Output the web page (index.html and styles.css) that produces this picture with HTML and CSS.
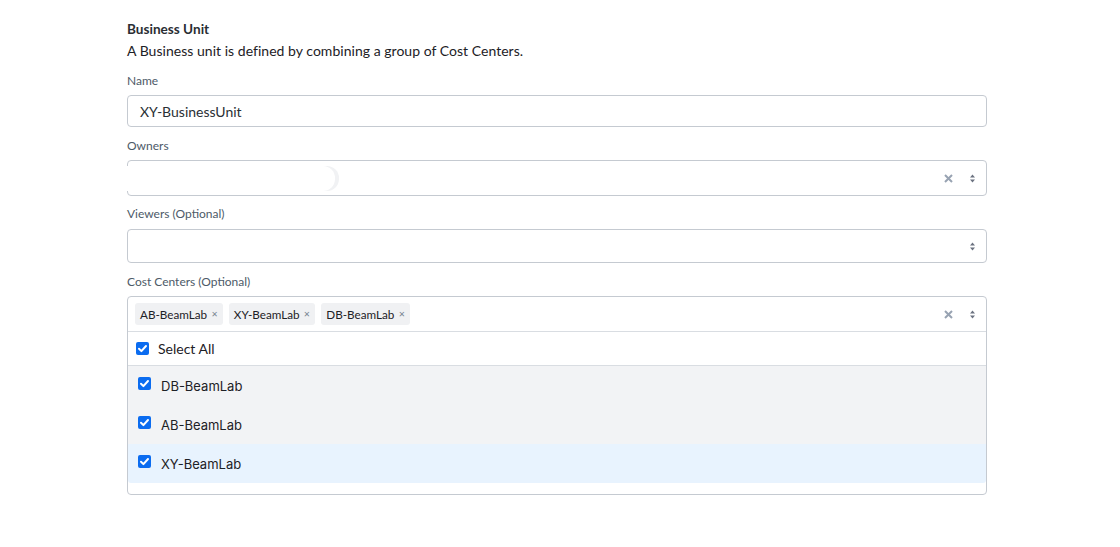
FILE: index.html
```html
<!DOCTYPE html>
<html>
<head>
<meta charset="utf-8">
<link rel="stylesheet" href="styles.css">
</head>
<body>
<div class="page">
  <div class="title">Business Unit</div>
  <div class="desc">A Business unit is defined by combining a group of Cost Centers.</div>

  <label class="label l-name">Name</label>
  <div class="input">XY-BusinessUnit</div>

  <label class="label l-owners">Owners</label>
  <div class="select owners">
    <div class="mask"></div>
    <div class="spacer"></div>
    <span class="clear"><svg width="9" height="9" viewBox="0 0 9 9"><path d="M1 1 L8 8 M8 1 L1 8" stroke="#98a3b2" stroke-width="2"/></svg></span>
    <span class="arrows"><svg width="7" height="9" viewBox="0 0 7 9"><path d="M3.5 0.5 L6 3.5 H1 Z M3.5 8.5 L6 5.5 H1 Z" fill="#6b7280"/></svg></span>
  </div>

  <label class="label l-viewers">Viewers (Optional)</label>
  <div class="select viewers">
    <div class="spacer"></div>
    <span class="arrows"><svg width="7" height="9" viewBox="0 0 7 9"><path d="M3.5 0.5 L6 3.5 H1 Z M3.5 8.5 L6 5.5 H1 Z" fill="#6b7280"/></svg></span>
  </div>

  <label class="label l-cost">Cost Centers (Optional)</label>
  <div class="multi">
    <div class="control">
      <div class="tags">
        <span class="tag">AB-BeamLab<span class="tx">&#x2715;</span></span>
        <span class="tag">XY-BeamLab<span class="tx">&#x2715;</span></span>
        <span class="tag">DB-BeamLab<span class="tx">&#x2715;</span></span>
      </div>
      <span class="clear"><svg width="9" height="9" viewBox="0 0 9 9"><path d="M1 1 L8 8 M8 1 L1 8" stroke="#98a3b2" stroke-width="2"/></svg></span>
      <span class="arrows"><svg width="7" height="9" viewBox="0 0 7 9"><path d="M3.5 0.5 L6 3.5 H1 Z M3.5 8.5 L6 5.5 H1 Z" fill="#6b7280"/></svg></span>
    </div>
    <div class="selectall">
      <span class="cb"><svg width="13" height="13" viewBox="0 0 13 13"><rect width="13" height="13" rx="2" fill="#0b6cf0"/><path d="M3 6.8 L5.4 9.1 L10 4" stroke="#fff" stroke-width="2" fill="none" stroke-linecap="round" stroke-linejoin="round"/></svg></span>
      <span>Select All</span>
    </div>
    <div class="options">
      <div class="opt">
        <span class="cb"><svg width="13" height="13" viewBox="0 0 13 13"><rect width="13" height="13" rx="2" fill="#0b6cf0"/><path d="M3 6.8 L5.4 9.1 L10 4" stroke="#fff" stroke-width="2" fill="none" stroke-linecap="round" stroke-linejoin="round"/></svg></span>
        <span>DB-BeamLab</span>
      </div>
      <div class="opt">
        <span class="cb"><svg width="13" height="13" viewBox="0 0 13 13"><rect width="13" height="13" rx="2" fill="#0b6cf0"/><path d="M3 6.8 L5.4 9.1 L10 4" stroke="#fff" stroke-width="2" fill="none" stroke-linecap="round" stroke-linejoin="round"/></svg></span>
        <span>AB-BeamLab</span>
      </div>
      <div class="opt focused">
        <span class="cb"><svg width="13" height="13" viewBox="0 0 13 13"><rect width="13" height="13" rx="2" fill="#0b6cf0"/><path d="M3 6.8 L5.4 9.1 L10 4" stroke="#fff" stroke-width="2" fill="none" stroke-linecap="round" stroke-linejoin="round"/></svg></span>
        <span>XY-BeamLab</span>
      </div>
    </div>
  </div>
</div>
</body>
</html>
```

FILE: styles.css
```css
* { box-sizing: border-box; }
html, body { margin: 0; padding: 0; background: #fff; }
body { font-family: "Lato", "Open Sans", sans-serif; color: #1f2328; }

.page {
  width: 860px;
  margin-left: 127px;
  padding-top: 19px;
  display: flex;
  flex-direction: column;
}

.title { font-size: 13.6px; font-weight: 700; line-height: 20px; color: #2a2e33; }
.desc { font-size: 14px; line-height: 20px; margin-top: 2px; color: #1d2126; letter-spacing: 0.03px; }

.label { font-size: 12px; line-height: 16px; color: #4d5a68; display: block; }
.l-name { margin-top: 12px; }
.l-owners { margin-top: 11px; }
.l-viewers { margin-top: 10px; }
.l-cost { margin-top: 11px; }

.input {
  margin-top: 6px;
  height: 32px;
  border: 1px solid #c5cad1;
  border-radius: 4px;
  padding-left: 12px;
  display: flex;
  align-items: center;
  font-size: 14px;
  color: #2a2f35;
}

.select {
  margin-top: 6px;
  border: 1px solid #c5cad1;
  border-radius: 4px;
  display: flex;
  align-items: center;
  position: relative;
}
.owners { height: 36px; }
.viewers { height: 34px; margin-top: 7px; }
.spacer { flex: 1; }

.mask {
  position: absolute;
  left: -1px;
  top: 5px;
  width: 208px;
  height: 25px;
  background: #fff;
  border-radius: 0 12px 12px 0;
  box-shadow: 4px 0 0 #f1f2f4;
}

.clear {
  display: flex;
  align-items: center;
  margin-right: 16px;
}
.clear svg { display: block; }
.arrows {
  display: flex;
  align-items: center;
  margin-right: 10px;
}

.multi {
  margin-top: 6px;
  height: 199px;
  border: 1px solid #c5cad1;
  border-radius: 4px;
  display: flex;
  flex-direction: column;
}
.control {
  height: 35px;
  display: flex;
  align-items: center;
  border-bottom: 1px solid #d9dde2;
}
.tags {
  flex: 1;
  display: flex;
  gap: 6px;
  padding-left: 7px;
}
.tag {
  height: 22px;
  background: #f0f1f3;
  border-radius: 3px;
  padding: 0 5px 0 5px;
  display: flex;
  align-items: center;
  font-size: 11.7px;
  color: #1d2126;
}
.tx {
  font-family: "DejaVu Sans", sans-serif;
  font-size: 8px;
  font-weight: 700;
  color: #7b8794;
  margin-left: 4px;
}

.selectall {
  height: 34px;
  display: flex;
  align-items: center;
  padding-left: 8px;
  gap: 9px;
  font-size: 14px;
  color: #1d2126;
  border-bottom: 1px solid #d9dde2;
}
.cb { display: flex; }
.cb svg { display: block; }

.options {
  display: flex;
  flex-direction: column;
  padding-bottom: 11px;
}
.opt {
  height: 39px;
  display: flex;
  align-items: center;
  padding-left: 10px;
  gap: 10px;
  background: #f2f3f5;
  font-family: "Inter", sans-serif;
  font-size: 13px;
  color: #1d2126;
}
.opt .cb { margin-top: -4px; }
.opt.focused { background: #e8f3fe; border-radius: 0 0 3px 3px; }
```
